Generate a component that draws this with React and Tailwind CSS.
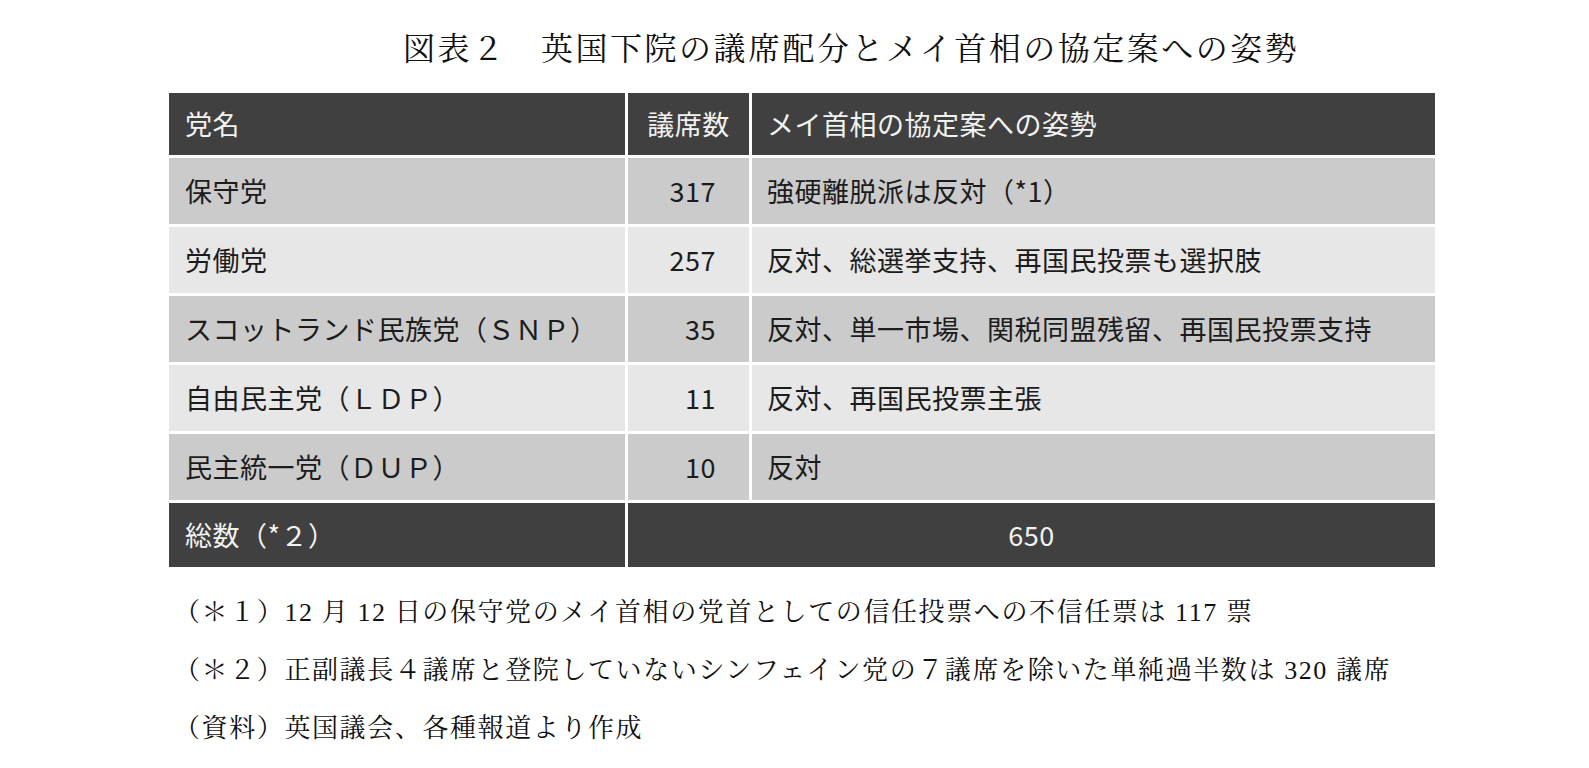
const rows = [
  { name: "保守党", seats: "317", stance: "強硬離脱派は反対（*1）", bg: "bg-[#cbcbcb]" },
  { name: "労働党", seats: "257", stance: "反対、総選挙支持、再国民投票も選択肢", bg: "bg-[#e7e7e7]" },
  { name: "スコットランド民族党（ＳＮＰ）", seats: "35", stance: "反対、単一市場、関税同盟残留、再国民投票支持", bg: "bg-[#cbcbcb]" },
  { name: "自由民主党（ＬＤＰ）", seats: "11", stance: "反対、再国民投票主張", bg: "bg-[#e7e7e7]" },
  { name: "民主統一党（ＤＵＰ）", seats: "10", stance: "反対", bg: "bg-[#cbcbcb]" },
]

const sans = "font-['Noto_Sans_CJK_JP',sans-serif]"
const serif = "font-['Liberation_Serif','Noto_Serif_CJK_JP','IPAMincho','Noto_Sans_CJK_JP',serif]"

const App = () => {
  return (
    <div className="w-full h-[768px] bg-white overflow-hidden">
      <div className="ml-[169px] w-[1266px]">
        <h1 className={`${serif} text-[32px] leading-none text-[#111] pt-[33px] pl-[234px] tracking-[2.5px] font-normal`}>
          図表２　英国下院の議席配分とメイ首相の協定案への姿勢
        </h1>

        <div className={`${sans} mt-[28px] grid grid-cols-[456px_121px_683px] gap-[3px] text-[27px] tracking-[0.5px]`}>
          <div className="h-[62px] bg-[#404040] text-[#f2f2f2] flex items-center pl-[16px]">党名</div>
          <div className="h-[62px] bg-[#404040] text-[#f2f2f2] flex items-center justify-center">議席数</div>
          <div className="h-[62px] bg-[#404040] text-[#f2f2f2] flex items-center pl-[15px]">メイ首相の協定案への姿勢</div>

          {rows.map((r) => (
            <div key={r.name} className="contents">
              <div className={`h-[66px] ${r.bg} text-[#1c1c1c] flex items-center pl-[16px]`}>{r.name}</div>
              <div className={`h-[66px] ${r.bg} text-[#1c1c1c] flex items-center justify-end pr-[33px]`}>{r.seats}</div>
              <div className={`h-[66px] ${r.bg} text-[#1c1c1c] flex items-center pl-[15px]`}>{r.stance}</div>
            </div>
          ))}

          <div className="h-[64px] bg-[#404040] text-[#f2f2f2] flex items-center pl-[16px]">総数（*２）</div>
          <div className="col-span-2 h-[64px] bg-[#404040] text-[#f2f2f2] flex items-center justify-center">650</div>
        </div>

        <div className={`${serif} mt-[17px] pl-[5px] text-[26px] leading-[58px] tracking-[1.6px] text-[#111]`}>
          <p>（＊１）12 月 12 日の保守党のメイ首相の党首としての信任投票への不信任票は 117 票</p>
          <p>（＊２）正副議長４議席と登院していないシンフェイン党の７議席を除いた単純過半数は 320 議席</p>
          <p>（資料）英国議会、各種報道より作成</p>
        </div>
      </div>
    </div>
  )
}

export default App
